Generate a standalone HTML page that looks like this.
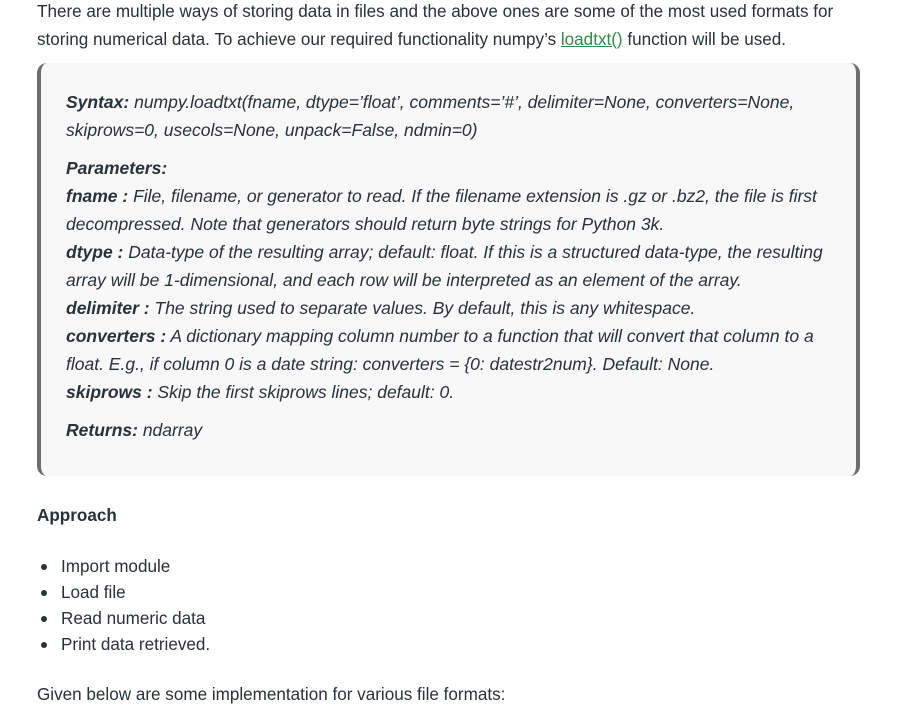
<!DOCTYPE html>
<html><head><meta charset="utf-8"><style>
body{margin:0;background:#fff;font-family:"Liberation Sans",sans-serif;color:#273239;font-size:17.1px;width:917px;height:704px;overflow:hidden;position:relative}
.t{position:absolute;left:37px;white-space:nowrap;line-height:28px}
a{color:#2f8d46;text-decoration:underline}
.box{position:absolute;left:37px;top:63px;width:815px;height:413px;background:#f8f8f8;border-left:4px solid #6e6e6e;border-right:4px solid #6e6e6e;border-radius:10px}
.b{position:absolute;left:66px;white-space:nowrap;line-height:28px;font-style:italic;font-size:17.5px}
.b b{font-weight:bold}
li{position:absolute;left:61px;white-space:nowrap;list-style:none;line-height:26px}
li:before{content:"";position:absolute;left:-20px;top:10px;width:6px;height:6px;border-radius:50%;background:#273239}
</style></head><body>
<div class="t" style="top:-2px">There are multiple ways of storing data in files and the above ones are some of the most used formats for</div>
<div class="t" style="top:26px">storing numerical data. To achieve our required functionality numpy’s <a>loadtxt()</a> function will be used.</div>
<div class="box"></div>
<div class="b" style="top:88px"><b>Syntax:</b> numpy.loadtxt(fname, dtype=’float’, comments=’#’, delimiter=None, converters=None,</div>
<div class="b" style="top:116px">skiprows=0, usecols=None, unpack=False, ndmin=0)</div>
<div class="b" style="top:154px"><b>Parameters:</b></div>
<div class="b" style="top:182px"><b>fname :</b> File, filename, or generator to read. If the filename extension is .gz or .bz2, the file is first</div>
<div class="b" style="top:210px">decompressed. Note that generators should return byte strings for Python 3k.</div>
<div class="b" style="top:238px"><b>dtype :</b> Data-type of the resulting array; default: float. If this is a structured data-type, the resulting</div>
<div class="b" style="top:266px">array will be 1-dimensional, and each row will be interpreted as an element of the array.</div>
<div class="b" style="top:294px"><b>delimiter :</b> The string used to separate values. By default, this is any whitespace.</div>
<div class="b" style="top:322px"><b>converters :</b> A dictionary mapping column number to a function that will convert that column to a</div>
<div class="b" style="top:350px">float. E.g., if column 0 is a date string: converters = {0: datestr2num}. Default: None.</div>
<div class="b" style="top:378px"><b>skiprows :</b> Skip the first skiprows lines; default: 0.</div>
<div class="b" style="top:416px"><b>Returns:</b> ndarray</div>
<div class="t" style="top:502px;font-weight:bold">Approach</div>
<ul style="margin:0;padding:0">
<li style="top:554px">Import module</li>
<li style="top:580px">Load file</li>
<li style="top:606px">Read numeric data</li>
<li style="top:632px">Print data retrieved.</li>
</ul>
<div class="t" style="top:681px">Given below are some implementation for various file formats:</div>
</body></html>
